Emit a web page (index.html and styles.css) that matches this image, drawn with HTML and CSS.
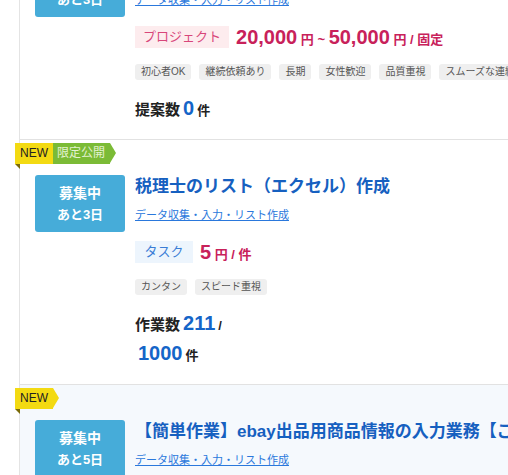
FILE: index.html
```html
<!DOCTYPE html>
<html lang="ja">
<head>
<meta charset="utf-8">
<title>仕事一覧</title>
<link rel="stylesheet" href="styles.css">
</head>
<body>
<div class="page">
  <ul class="jobs">
    <li class="job">
      <div class="status"><span class="st-main">募集中</span><span class="st-sub">あと3日</span></div>
      <div class="body">
        <h3 class="title"><a class="title-link">企業リストの作成・データ入力のお仕事</a></h3>
        <div class="cat-row"><a class="cat">データ収集・入力・リスト作成</a></div>
        <div class="price">
          <span class="kind kind-project">プロジェクト</span>
          <span class="amount"><b class="num">20,000</b> 円 ~ <b class="num">50,000</b> 円 / 固定</span>
        </div>
        <ul class="tags">
          <li class="tag">初心者OK</li>
          <li class="tag">継続依頼あり</li>
          <li class="tag">長期</li>
          <li class="tag">女性歓迎</li>
          <li class="tag">品質重視</li>
          <li class="tag">スムーズな連絡</li>
        </ul>
        <div class="stats"><span class="lbl">提案数</span><b class="cnt">0</b><span class="unit">件</span></div>
      </div>
    </li>
    <li class="job">
      <div class="ribbon"><span class="rb rb-new">NEW</span><span class="rb rb-limited">限定公開</span></div>
      <div class="status"><span class="st-main">募集中</span><span class="st-sub">あと3日</span></div>
      <div class="body">
        <h3 class="title"><a class="title-link">税理士のリスト（エクセル）作成</a></h3>
        <div class="cat-row"><a class="cat">データ収集・入力・リスト作成</a></div>
        <div class="price">
          <span class="kind kind-task">タスク</span>
          <span class="amount"><b class="num">5</b> 円 / 件</span>
        </div>
        <ul class="tags">
          <li class="tag">カンタン</li>
          <li class="tag">スピード重視</li>
        </ul>
        <div class="stats"><span class="lbl">作業数</span><b class="cnt">211</b><span class="unit">/</span> <b class="cnt">1000</b><span class="unit">件</span></div>
      </div>
    </li>
    <li class="job job-hl">
      <div class="ribbon"><span class="rb rb-new">NEW</span></div>
      <div class="status"><span class="st-main">募集中</span><span class="st-sub">あと5日</span></div>
      <div class="body">
        <h3 class="title"><a class="title-link">【簡単作業】ebay出品用商品情報の入力業務【ご経験者歓迎】</a></h3>
        <div class="cat-row"><a class="cat">データ収集・入力・リスト作成</a></div>
        <div class="price">
          <span class="kind kind-project">プロジェクト</span>
          <span class="amount"><b class="num">10,000</b> 円 ~ <b class="num">30,000</b> 円 / 固定</span>
        </div>
        <ul class="tags">
          <li class="tag">初心者OK</li>
          <li class="tag">長期</li>
        </ul>
        <div class="stats"><span class="lbl">提案数</span><b class="cnt">2</b><span class="unit">件</span></div>
      </div>
    </li>
  </ul>
</div>
</body>
</html>
```
FILE: styles.css
```css
html, body {
  margin: 0;
  padding: 0;
  background: #fff;
  overflow: hidden;
}
body {
  width: 508px;
  height: 475px;
  font-family: "Liberation Sans", "Noto Sans CJK JP", sans-serif;
  color: #222;
}
.page {
  width: 760px;
  padding-left: 19px;
}
.jobs {
  list-style: none;
  margin: -75px 0 0;
  padding: 0;
  border-left: 1px solid #e4e4e4;
}
.job {
  position: relative;
  display: flex;
  gap: 10px;
  padding: 35px 0 14px 15px;
  border-bottom: 1px solid #e2e2e2;
  background: #fff;
}
.job-hl {
  background: #f5f9fd;
}
.status {
  flex: none;
  width: 90px;
  height: 57px;
  border-radius: 3px;
  background: #46acd9;
  color: #fff;
  font-weight: bold;
  display: flex;
  flex-direction: column;
  align-items: center;
  justify-content: center;
}
.st-main {
  font-size: 14px;
  line-height: 21px;
}
.st-sub {
  font-size: 13px;
  line-height: 21px;
}
.body {
  flex: 1;
  min-width: 0;
}
.title {
  margin: 0;
  font-size: 17px;
  line-height: 24px;
  font-weight: bold;
  white-space: nowrap;
}
.title-link {
  color: #1660c0;
}
.cat-row {
  margin-top: 6px;
  line-height: 18px;
}
.cat {
  font-size: 11px;
  color: #2a78dc;
  text-decoration: underline;
}
.price {
  display: flex;
  align-items: center;
  height: 22px;
  margin-top: 17px;
}
.kind {
  min-width: 58px;
  box-sizing: border-box;
  height: 22px;
  line-height: 22px;
  padding: 0 8px;
  font-size: 13px;
  text-align: center;
}
.kind-project {
  background: #fdecee;
  color: #d8467a;
}
.kind-task {
  background: #edf5fd;
  color: #3a7dd6;
}
.amount {
  margin-left: 7px;
  font-size: 13px;
  font-weight: bold;
  color: #c8215a;
  white-space: nowrap;
}
.amount .num {
  font-size: 20px;
}
.tags {
  display: flex;
  gap: 8px;
  list-style: none;
  margin: 16px 0 0;
  padding: 0;
  white-space: nowrap;
}
.tag {
  background: #efefef;
  color: #555;
  font-size: 10px;
  line-height: 16px;
  padding: 0 6px;
  border-radius: 3px;
}
.stats {
  width: 100px;
  margin-top: 15px;
  line-height: 30px;
  font-weight: bold;
  white-space: normal;
}
.lbl,
.cnt,
.unit {
  line-height: 1;
}
.lbl {
  font-size: 15px;
  color: #222;
}
.cnt {
  margin-left: 3px;
  font-size: 20px;
  color: #1565c8;
}
.unit {
  margin-left: 3px;
  font-size: 13px;
  color: #222;
}
.ribbon {
  position: absolute;
  top: 3px;
  left: -5px;
  display: flex;
  height: 21px;
}
.ribbon::before {
  content: "";
  position: absolute;
  left: 0;
  top: 21px;
  border-top: 5px solid #7a6a08;
  border-left: 5px solid transparent;
}
.rb {
  position: relative;
  height: 21px;
  line-height: 21px;
  font-size: 12px;
}
.rb-new {
  padding: 0 5px;
  background: #f3da12;
  color: #222;
}
.rb-limited {
  padding: 0 5px 0 4px;
  background: #7bbb36;
  color: #e4f2d0;
}
.rb:last-child::after {
  content: "";
  position: absolute;
  left: 100%;
  top: 0;
  border-top: 10.5px solid transparent;
  border-bottom: 10.5px solid transparent;
  border-left: 6px solid transparent;
}
.rb-new:last-child::after {
  border-left-color: #f3da12;
}
.rb-limited:last-child::after {
  border-left-color: #7bbb36;
}
```
